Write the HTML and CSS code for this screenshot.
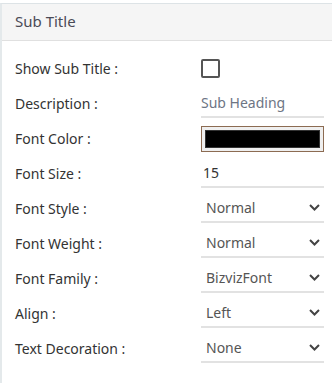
FILE: index.html
```html
<!DOCTYPE html>
<html>
<head>
<meta charset="utf-8">
<link rel="stylesheet" href="styles.css">
</head>
<body>
<div class="panel">
  <div class="header">Sub Title</div>
  <div class="rows">
    <div class="row"><span class="label">Show Sub Title :</span><div class="ctrl"><span class="checkbox"></span></div></div>
    <div class="row"><span class="label">Description :</span><div class="ctrl"><div class="input muted">Sub Heading</div></div></div>
    <div class="row"><span class="label">Font Color :</span><div class="ctrl"><div class="color"><div class="swatch"></div></div></div></div>
    <div class="row"><span class="label">Font Size :</span><div class="ctrl"><div class="input num">15</div></div></div>
    <div class="row"><span class="label">Font Style :</span><div class="ctrl"><div class="select"><span>Normal</span><svg class="chev" width="11" height="7" viewBox="0 0 11 7"><path d="M1 1 L5.5 5.5 L10 1" fill="none" stroke="#444" stroke-width="2"/></svg></div></div></div>
    <div class="row"><span class="label">Font Weight :</span><div class="ctrl"><div class="select"><span>Normal</span><svg class="chev" width="11" height="7" viewBox="0 0 11 7"><path d="M1 1 L5.5 5.5 L10 1" fill="none" stroke="#444" stroke-width="2"/></svg></div></div></div>
    <div class="row"><span class="label">Font Family :</span><div class="ctrl"><div class="select"><span>BizvizFont</span><svg class="chev" width="11" height="7" viewBox="0 0 11 7"><path d="M1 1 L5.5 5.5 L10 1" fill="none" stroke="#444" stroke-width="2"/></svg></div></div></div>
    <div class="row"><span class="label">Align :</span><div class="ctrl"><div class="select"><span>Left</span><svg class="chev" width="11" height="7" viewBox="0 0 11 7"><path d="M1 1 L5.5 5.5 L10 1" fill="none" stroke="#444" stroke-width="2"/></svg></div></div></div>
    <div class="row"><span class="label">Text Decoration :</span><div class="ctrl"><div class="select"><span>None</span><svg class="chev" width="11" height="7" viewBox="0 0 11 7"><path d="M1 1 L5.5 5.5 L10 1" fill="none" stroke="#444" stroke-width="2"/></svg></div></div></div>
  </div>
</div>
</body>
</html>
```
FILE: styles.css
```css
html, body {
  margin: 0;
  padding: 0;
  background: #fff;
}
body {
  font-family: "Noto Sans", "Open Sans", sans-serif;
  color: #333;
}
.panel {
  margin-top: 3px;
  border-left: 2px solid #e4e9eb;
  border-top: 1px solid #dde3e6;
  min-height: 380px;
  box-sizing: border-box;
}
.header {
  height: 37px;
  box-sizing: border-box;
  background: #f5f5f5;
  border-bottom: 1px solid #e0e0e0;
  padding-left: 13px;
  font-size: 15px;
  line-height: 34px;
  color: #4a4a55;
}
.rows {
  padding-top: 10px;
}
.row {
  height: 35px;
  display: flex;
  align-items: center;
}
.label {
  width: 199px;
  padding-left: 13px;
  box-sizing: border-box;
  font-size: 14px;
  color: #333;
}
.ctrl {
  width: 123px;
  display: flex;
  align-items: center;
}
.checkbox {
  width: 15px;
  height: 15px;
  border: 2px solid #555;
  border-radius: 2px;
  margin-top: -1px;
}
.input {
  width: 100%;
  height: 28px;
  box-sizing: border-box;
  border-bottom: 2px solid #e2e2e2;
  font-size: 14px;
  line-height: 26px;
}
.input.muted {
  color: #6d7584;
}
.input.num {
  padding-left: 2px;
  color: #333;
}
.color {
  width: 100%;
  height: 26px;
  box-sizing: border-box;
  border: 1px solid #8c6b52;
  background: #efefef;
  padding: 3px;
}
.swatch {
  height: 100%;
  background: #000;
  border: 1px solid #333;
  box-sizing: border-box;
}
.select {
  width: 100%;
  height: 28px;
  box-sizing: border-box;
  border-bottom: 2px solid #e2e2e2;
  display: flex;
  align-items: center;
  justify-content: space-between;
  padding-left: 5px;
  padding-right: 4px;
  font-size: 14px;
  color: #555;
}
.chev {
  display: block;
}
```
